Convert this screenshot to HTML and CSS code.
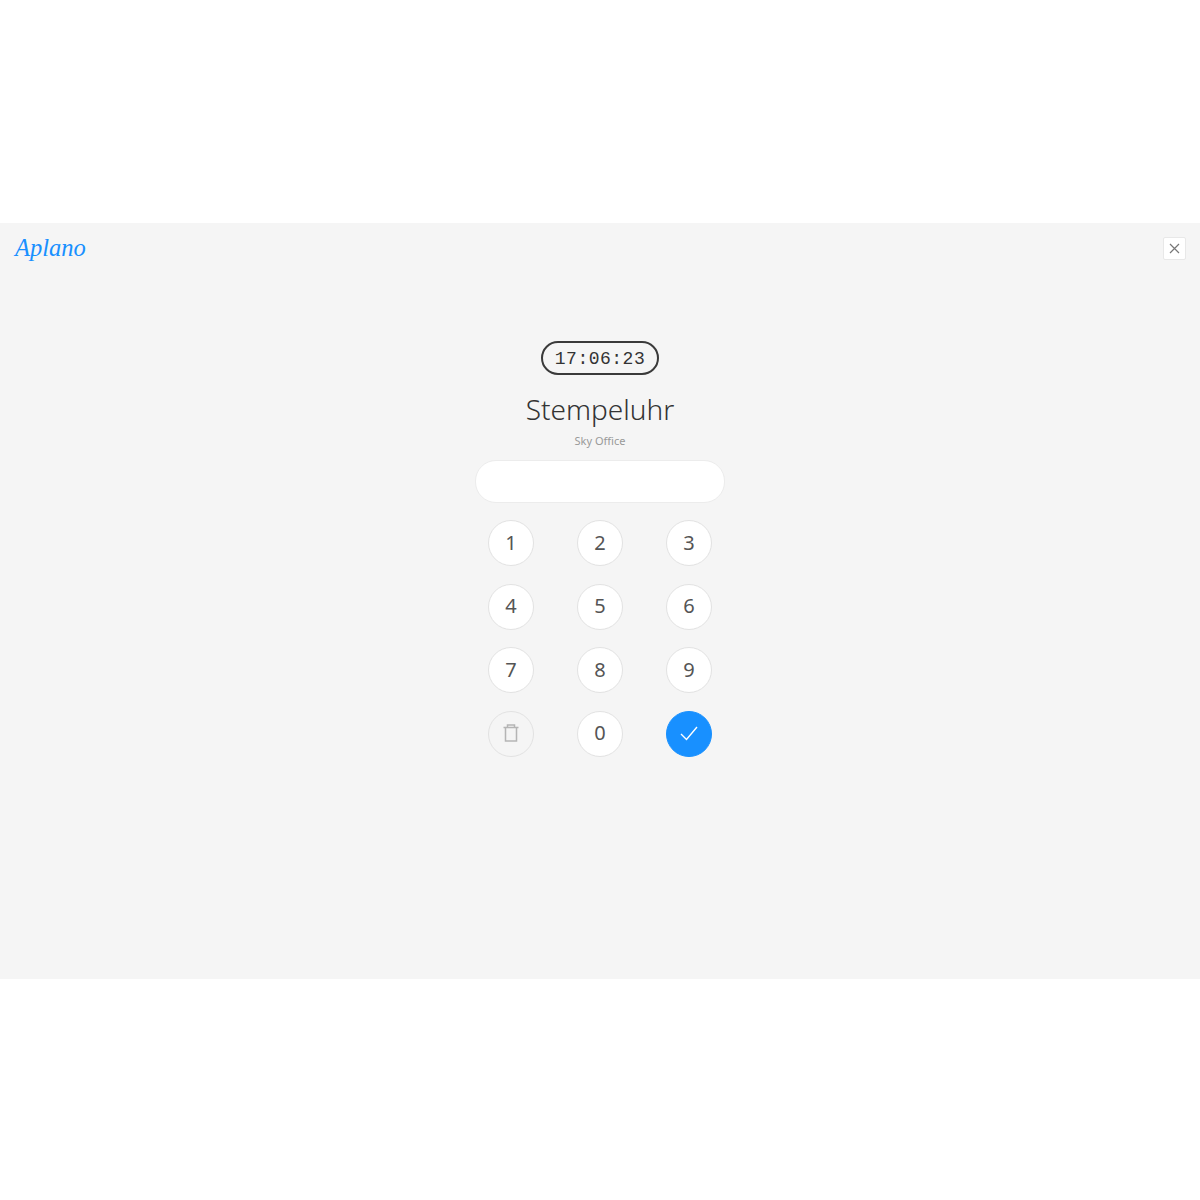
FILE: index.html
```html
<!DOCTYPE html>
<html lang="de">
<head>
  <meta charset="UTF-8" />
  <meta name="viewport" content="width=device-width, initial-scale=1.0"/>
  <title>Aplano Stempeluhr</title>
  <link rel="stylesheet" href="styles.css">
</head>
<body>
  <div class="screen">
    <header class="topbar">
      <div class="logo">Aplano</div>
      <button class="close-btn">
        <svg width="11" height="11" viewBox="0 0 11 11"><path d="M1 1l9 9M10 1l-9 9" stroke="#777" stroke-width="1.2" fill="none"/></svg>
      </button>
    </header>

    <main class="clock">
      <div class="time">17:06:23</div>
      <h1 class="title">Stempeluhr</h1>
      <div class="branch">Sky Office</div>
      <div class="pin-input"></div>

      <div class="keypad">
        <button class="key">1</button>
        <button class="key">2</button>
        <button class="key">3</button>
        <button class="key">4</button>
        <button class="key">5</button>
        <button class="key">6</button>
        <button class="key">7</button>
        <button class="key">8</button>
        <button class="key">9</button>
        <button class="key key-clear">
          <svg class="icon-up" width="16" height="18" viewBox="0 0 16 18" fill="none" stroke="#b5b5b5" stroke-width="1.5"><path d="M0.5 3.5h15M4.5 3.5V1h7v2.5M2.5 3.5v13.5h11V3.5"/></svg>
        </button>
        <button class="key">0</button>
        <button class="key key-ok">
          <svg class="icon-up" width="18" height="15" viewBox="0 0 18 15" fill="none" stroke="#fff" stroke-width="1.4"><path d="M1 8l5.5 5.5L17 1"/></svg>
        </button>
      </div>
    </main>
  </div>
</body>
</html>
```

FILE: styles.css
```css
* { margin: 0; padding: 0; box-sizing: border-box; }

body { background: #fff; font-family: "Noto Sans", sans-serif; }

/* Grey stage in the middle of the window */
.screen {
  margin-top: 223px;
  height: 756px;
  background: #f5f5f5;
}

.topbar {
  display: flex;
  justify-content: space-between;
  align-items: flex-start;
  padding: 10px 14px 0 15px;
  height: 118px;
}

.logo {
  font-family: "Liberation Serif", serif;
  font-style: italic;
  font-size: 24.5px;
  line-height: 30px;
  color: #1890ff;
}

.close-btn {
  width: 23px;
  height: 23px;
  margin-top: 4px;
  background: #fff;
  border: 1px solid #e8e8e8;
  border-radius: 2px;
  display: flex;
  align-items: center;
  justify-content: center;
}

.clock { display: flex; flex-direction: column; align-items: center; }

.time {
  width: 118px;
  height: 34px;
  border: 2px solid #3a3a3a;
  border-radius: 17px;
  font-family: "Liberation Mono", monospace;
  font-size: 18px;
  letter-spacing: 0.5px;
  line-height: 32px;
  text-align: center;
  color: #333;
}

.title {
  margin-top: 16px;
  font-family: "Noto Sans", sans-serif;
  font-weight: 300;
  font-size: 28px;
  line-height: 36px;
  color: #333;
}

.branch {
  margin-top: 6px;
  font-size: 11px;
  line-height: 16px;
  color: #999;
}

.pin-input {
  margin-top: 11px;
  width: 250px;
  height: 43px;
  background: #fff;
  border: 1px solid #ececec;
  border-radius: 21px;
}

.keypad {
  margin-top: 17px;
  width: 224px;
  display: grid;
  grid-template-columns: repeat(3, 46px);
  justify-content: space-between;
  row-gap: 17.5px;
}

.key {
  width: 46px;
  height: 46px;
  padding-bottom: 2px;
  border-radius: 50%;
  background: #fff;
  border: 1px solid #e2e2e2;
  font-family: "Noto Sans", sans-serif;
  font-size: 20px;
  color: #555;
  display: flex;
  align-items: center;
  justify-content: center;
}

.key-clear { background: #f5f5f5; }

.key-ok { background: #1890ff; border-color: #1890ff; }

.icon-up { margin-top: 1px; }
```
